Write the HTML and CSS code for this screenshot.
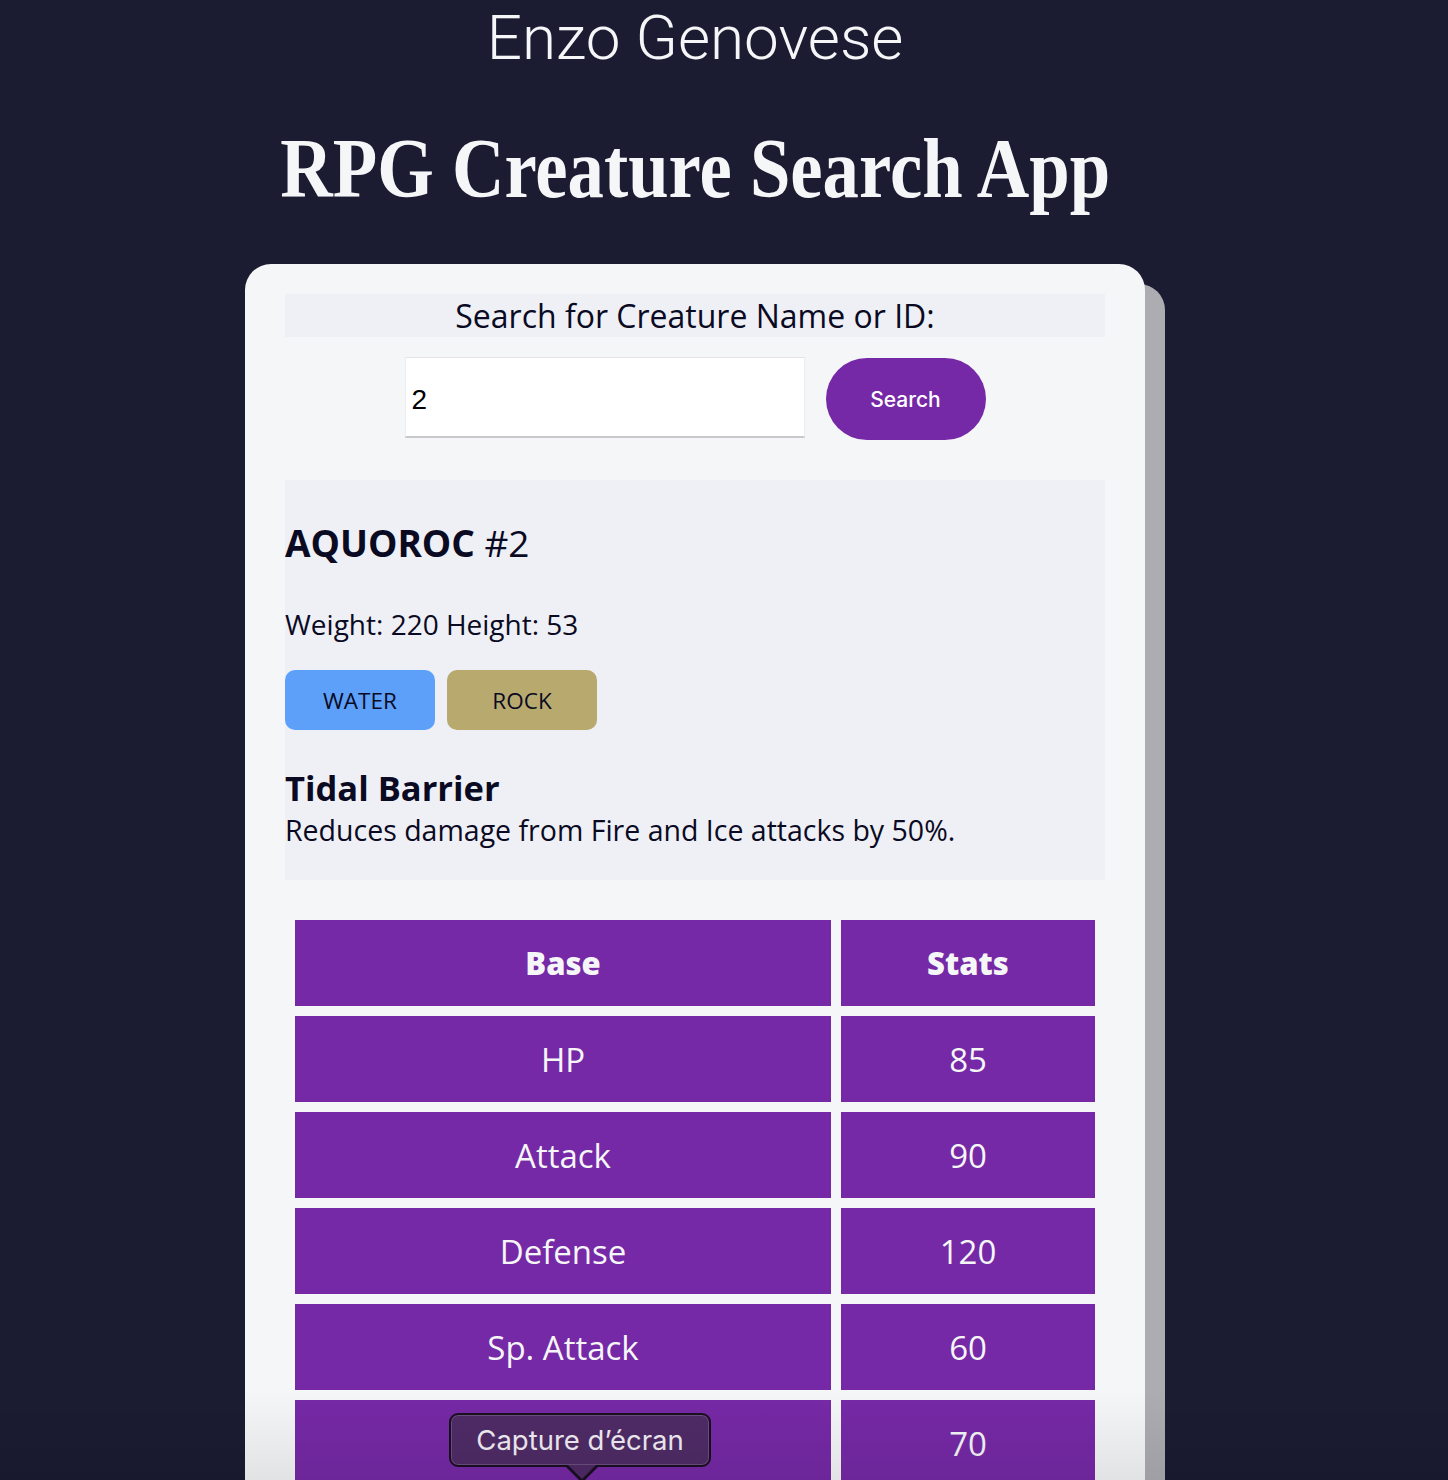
FILE: index.html
```html
<!DOCTYPE html>
<html lang="en">
<head>
<meta charset="utf-8">
<title>RPG Creature Search App</title>
<link rel="stylesheet" href="styles.css">
</head>
<body>
<div class="page">
  <h2 class="author">Enzo Genovese</h2>
  <h1 class="title">RPG Creature Search App</h1>
  <main class="card">
    <form class="search-form">
      <label class="search-label" for="search-input">Search for Creature Name or ID:</label>
      <div class="search-row">
        <input id="search-input" class="search-input" type="text" value="2">
        <button type="button" class="search-btn">Search</button>
      </div>
    </form>
    <section class="result">
      <h2 class="creature-name"><span class="name">AQUOROC</span> #2</h2>
      <p class="size">Weight: 220 Height: 53</p>
      <div class="types">
        <span class="type type-water">WATER</span>
        <span class="type type-rock">ROCK</span>
      </div>
      <h3 class="ability">Tidal Barrier</h3>
      <p class="ability-desc">Reduces damage from Fire and Ice attacks by 50%.</p>
    </section>
    <table class="stats">
      <thead>
        <tr><th class="col-base">Base</th><th class="col-stat">Stats</th></tr>
      </thead>
      <tbody>
        <tr><td>HP</td><td>85</td></tr>
        <tr><td>Attack</td><td>90</td></tr>
        <tr><td>Defense</td><td>120</td></tr>
        <tr><td>Sp. Attack</td><td>60</td></tr>
        <tr><td>Sp. Defense</td><td>70</td></tr>
        <tr><td>Speed</td><td>50</td></tr>
      </tbody>
    </table>
  </main>
</div>
<div class="tooltip">Capture d’écran</div>
<div class="bottom-fade"></div>
</body>
</html>
```
FILE: styles.css
```css
* { box-sizing: border-box; }

html, body {
  margin: 0;
  padding: 0;
}

body {
  background: #1b1b32;
  color: #0a0a23;
  font-family: "Open Sans", "Liberation Sans", sans-serif;
  min-height: 1480px;
  overflow: hidden;
}

.page {
  width: 1390px;
  display: flex;
  flex-direction: column;
  align-items: center;
}

.author {
  margin: 0;
  padding-top: 1px;
  padding-bottom: 3px;
  font-family: Roboto, "Liberation Sans", sans-serif;
  font-weight: 300;
  font-size: 62px;
  line-height: 74px;
  color: #f5f6f7;
}

.title {
  margin: 40px 0 0 0;
  font-family: "Liberation Serif", serif;
  font-weight: 700;
  font-size: 85px;
  line-height: 100px;
  color: #f5f6f7;
  transform: scaleX(0.855);
  white-space: nowrap;
}

.card {
  margin-top: 46px;
  width: 900px;
  background: #f5f6f7;
  border-radius: 26px;
  padding: 30px 40px 40px;
  box-shadow: 20px 20px 0 #adacb1;
}

.search-form {
  display: flex;
  flex-direction: column;
  align-items: center;
}

.search-label {
  display: block;
  width: 100%;
  background: #eff0f5;
  text-align: center;
  font-size: 32px;
  line-height: 43px;
  color: #0a0a23;
}

.search-row {
  margin-top: 20px;
  display: flex;
  align-items: flex-start;
  gap: 21px;
}

.search-input {
  width: 400px;
  height: 81px;
  border: none;
  border-top: 1px solid #e4e4e6;
  border-left: 1px solid #ededef;
  border-right: 1px solid #ededef;
  border-bottom: 2px solid #c9c9cc;
  background: #fff;
  padding: 5px 6px 0;
  font-family: "Liberation Sans", Arial, sans-serif;
  font-size: 28px;
  color: #000;
  outline: none;
}

.search-btn {
  width: 160px;
  height: 82px;
  margin-top: 1px;
  border: none;
  border-radius: 41px;
  background: #7629a6;
  color: #fff;
  font-family: Inter, "Liberation Sans", sans-serif;
  font-size: 21px;
  font-weight: 500;
  cursor: pointer;
}

.result {
  margin-top: 40px;
  background: #eff0f5;
  padding: 38px 0 0;
  min-height: 400px;
}

.creature-name {
  margin: 0;
  font-size: 37px;
  line-height: 50px;
  font-weight: 400;
}

.creature-name .name {
  font-weight: 700;
}

.size {
  margin: 37px 0 0;
  font-size: 28px;
  line-height: 38px;
}

.types {
  margin-top: 27px;
  display: flex;
  gap: 12px;
}

.type {
  width: 150px;
  height: 60px;
  border-radius: 10px;
  display: flex;
  align-items: center;
  justify-content: center;
  font-size: 22.5px;
  color: #0a0a23;
}

.type-water { background: #5ca0fa; }
.type-rock { background: #b8aa6f; }

.ability {
  margin: 38px 0 0;
  font-size: 34.5px;
  line-height: 40px;
  font-weight: 700;
}

.ability-desc {
  margin: 0;
  font-size: 28.5px;
  line-height: 44px;
}

.stats {
  margin-top: 30px;
  width: 820px;
  border-spacing: 10px;
  table-layout: fixed;
}

.stats th,
.stats td {
  background: #7629a6;
  color: #f5f6f7;
  height: 86px;
  text-align: center;
  padding: 0;
}

.stats th {
  font-size: 31px;
  font-weight: 800;
}

.stats td {
  font-size: 33px;
  font-weight: 400;
}

.col-base { width: 536px; }
.col-stat { width: 254px; }

.tooltip {
  position: absolute;
  left: 449px;
  top: 1413px;
  width: 262px;
  height: 54px;
  background: #4f2b66;
  border: 2px solid #1a0f22;
  box-shadow: inset 0 0 0 1px #6c4f80;
  border-radius: 9px;
  color: #f2eef5;
  font-family: Inter, "Liberation Sans", sans-serif;
  font-size: 27.5px;
  line-height: 50px;
  text-align: center;
}

.tooltip::before {
  content: "";
  position: absolute;
  left: 114px;
  bottom: -18px;
  border-left: 17px solid transparent;
  border-right: 17px solid transparent;
  border-top: 17px solid #1a0f22;
}

.tooltip::after {
  content: "";
  position: absolute;
  left: 117px;
  bottom: -14px;
  border-left: 14px solid transparent;
  border-right: 14px solid transparent;
  border-top: 14px solid #4f2b66;
}

.bottom-fade {
  position: absolute;
  left: 0;
  top: 1390px;
  width: 100%;
  height: 90px;
  background: linear-gradient(to bottom, rgba(0, 0, 0, 0), rgba(0, 0, 0, 0.08));
  pointer-events: none;
}
```
